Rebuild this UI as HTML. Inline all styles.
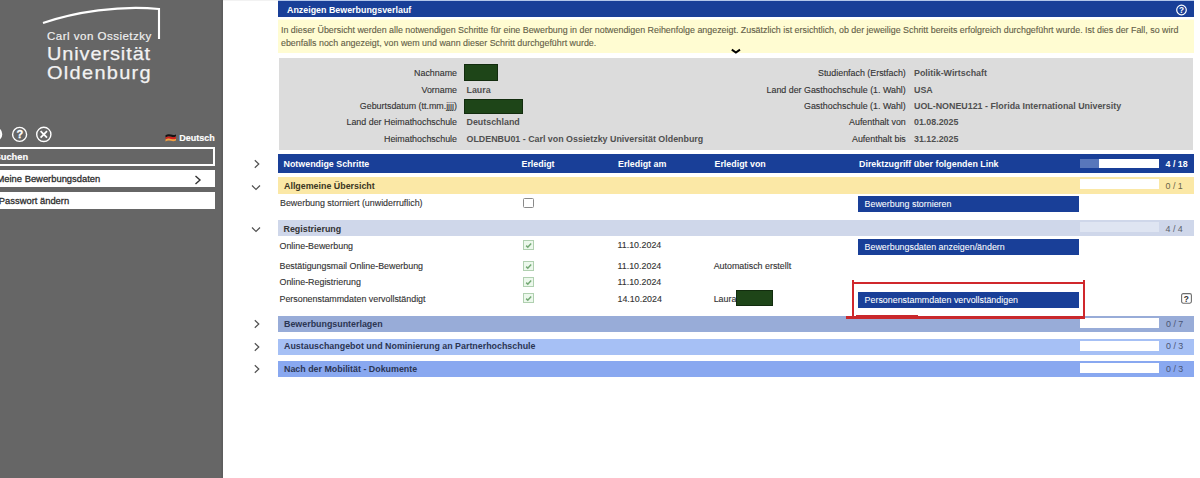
<!DOCTYPE html>
<html><head><meta charset="utf-8">
<style>
*{margin:0;padding:0;box-sizing:border-box}
html,body{width:1200px;height:478px;overflow:hidden;background:#fff;font-family:"Liberation Sans",sans-serif;}
.a{position:absolute;white-space:nowrap}
#sb{position:absolute;left:0;top:0;width:223px;height:478px;background:#666666;box-shadow:inset -1.5px 0 0 #5d5d5d}
.t{position:absolute;white-space:nowrap;font-size:8.9px;line-height:10px;color:#333;-webkit-text-stroke-width:0.12px}
.b{-webkit-text-stroke-width:0}
.v{color:#505050}
.b{font-weight:bold}
.r{text-align:right}
.box{position:absolute}
.btn{position:absolute;left:858px;width:221px;height:16px;background:#193f98;color:#fff;font-size:8.9px;line-height:17px;padding-left:6.6px;white-space:nowrap;-webkit-text-stroke-width:0.05px}
.prog{position:absolute;left:1080px;width:79px;height:10px;background:#fff}
.cnt{position:absolute;left:1164px;width:24px;font-size:8.9px;line-height:10px;white-space:nowrap}
.chk{position:absolute;left:523px;width:11px;height:10px;border:1px solid #b0d0b0;background:#ecf8ec}
.chk svg{position:absolute;left:0;top:0}
.chv{position:absolute;left:254px;width:8px;height:10px}
</style></head><body>
<div id="sb">
  <svg class="a" style="left:0;top:0" width="222" height="478" viewBox="0 0 222 478">
    <path d="M43,23 C75,12 120,5 159,9 L159,39" fill="none" stroke="#fff" stroke-width="2.1"/>
    <!-- icons -->
    <circle cx="-5" cy="134.2" r="6.2" fill="none" stroke="#fff" stroke-width="2.2"/>
    <circle cx="19.6" cy="134.4" r="7" fill="none" stroke="#fff" stroke-width="1.4"/>
    <circle cx="43.8" cy="134.4" r="7.1" fill="none" stroke="#fff" stroke-width="1.4"/>
    <path d="M40.6,131.2 L47,137.6 M47,131.2 L40.6,137.6" stroke="#fff" stroke-width="1.8"/>
    <!-- flag -->
    <path d="M165.5,135.2 Q168,133.6 171,134.6 Q173.5,135.4 176,134.4 L176,136.6 Q173.5,137.6 171,136.8 Q168,135.8 165.5,137.4 Z" fill="#141414"/>
    <path d="M165.5,137.4 Q168,135.8 171,136.8 Q173.5,137.6 176,136.6 L176,138.8 Q173.5,139.8 171,139 Q168,138 165.5,139.6 Z" fill="#d2231c"/>
    <path d="M165.5,139.6 Q168,138 171,139 Q173.5,139.8 176,138.8 L176,140.6 Q173.5,141.6 171,140.8 Q168,139.8 165.5,141.4 Z" fill="#f2a040"/>
  </svg>
  <div class="a" style="left:19.6px;top:134.4px;width:0;height:0"><span style="position:absolute;left:-3.2px;top:-6.5px;font-size:11px;line-height:12px;font-weight:bold;color:#fff;-webkit-text-stroke:0.3px #fff">?</span></div>
  <div class="a" style="left:47px;top:30px;font-size:11px;line-height:12px;color:#f2f2f2;transform:scaleX(1.05);transform-origin:0 0;letter-spacing:0.45px;-webkit-text-stroke:0.15px #f2f2f2">Carl von Ossietzky</div>
  <div class="a" style="left:47px;top:44px;font-size:19px;line-height:20px;color:#f2f2f2;transform:scaleX(1.05);transform-origin:0 0;letter-spacing:0.85px;-webkit-text-stroke:0.25px #f2f2f2">Universität</div>
  <div class="a" style="left:47px;top:63px;font-size:19px;line-height:20px;color:#f2f2f2;transform:scaleX(1.05);transform-origin:0 0;letter-spacing:1.25px;-webkit-text-stroke:0.25px #f2f2f2">Oldenburg</div>
  <div class="a" style="left:179.3px;top:133.3px;font-size:9px;line-height:11px;color:#fff;font-weight:bold;-webkit-text-stroke:0.15px #fff">Deutsch</div>
  <div class="a" style="left:-8px;top:147px;width:222.5px;height:19px;border:2px solid #fff"></div>
  <div class="a" style="left:-5.5px;top:152px;font-size:9.3px;line-height:11px;color:#fff;font-weight:bold;-webkit-text-stroke:0.15px #fff">Suchen</div>
  <div class="a" style="left:-8px;top:170px;width:222.5px;height:17px;background:#fff"></div>
  <div class="a" style="left:-3.5px;top:173px;font-size:9.4px;line-height:11px;color:#2e2e2e;-webkit-text-stroke-width:0.3px">Meine Bewerbungsdaten</div>
  <svg class="a" style="left:194px;top:174.5px" width="8" height="10" viewBox="0 0 8 10"><path d="M1.5,1 L6,5 L1.5,9" fill="none" stroke="#333" stroke-width="1.4"/></svg>
  <div class="a" style="left:-8px;top:191.5px;width:222.5px;height:17.5px;background:#fff"></div>
  <div class="a" style="left:-1.2px;top:195px;font-size:9.4px;line-height:11px;color:#2e2e2e;-webkit-text-stroke-width:0.3px">Passwort ändern</div>
</div>

<!-- main header -->
<div class="box" style="left:278px;top:0;width:916px;height:1px;background:#b3c6ea"></div>
<div class="box" style="left:223px;top:0;width:55px;height:1px;background:#f2f2f2"></div>
<div class="box" style="left:278px;top:1px;width:916px;height:16px;background:#193f98"></div>
<div class="t b" style="left:287px;top:4.5px;color:#fff">Anzeigen Bewerbungsverlauf</div>
<svg class="a" style="left:1175px;top:4px" width="13" height="13" viewBox="0 0 13 13"><circle cx="6.5" cy="6" r="4.8" fill="none" stroke="#fff" stroke-width="1.2"/><text x="6.5" y="9.2" font-size="8.2" font-weight="bold" text-anchor="middle" fill="#fff" font-family="Liberation Sans">?</text></svg>

<!-- info -->
<div class="box" style="left:278px;top:19px;width:916px;height:1px;background:#fffeea"></div><div class="box" style="left:278px;top:20px;width:916px;height:33px;background:#fffcd2"></div>
<div class="t" style="left:281px;top:25px;color:#645f48">In dieser Übersicht werden alle notwendigen Schritte für eine Bewerbung in der notwendigen Reihenfolge angezeigt. Zusätzlich ist ersichtlich, ob der jeweilige Schritt bereits erfolgreich durchgeführt wurde. Ist dies der Fall, so wird</div>
<div class="t" style="left:281px;top:37.8px;color:#645f48">ebenfalls noch angezeigt, von wem und wann dieser Schritt durchgeführt wurde.</div>
<svg class="a" style="left:730px;top:47px" width="12" height="8" viewBox="0 0 12 8"><path d="M1.8,2.6 L5.9,5.5 L10,2.6" fill="none" stroke="#000" stroke-width="1.9"/></svg>

<!-- gray info box -->
<div class="box" style="left:279px;top:58px;width:914px;height:92px;background:#dcdcdc"></div>
<div class="t r" style="left:257px;width:200px;top:68px">Nachname</div>
<div class="box" style="left:464px;top:64px;width:34px;height:16.8px;background:#1e4518;border:1px solid #122c0e"></div>
<div class="t r" style="left:257px;width:200px;top:84.5px">Vorname</div>
<div class="t b v" style="left:466.5px;top:84.5px">Laura</div>
<div class="t r" style="left:257px;width:200px;top:101px">Geburtsdatum (tt.mm.jjjj)</div>
<div class="box" style="left:464px;top:99px;width:59px;height:15px;background:#1e4518;border:1px solid #122c0e"></div>
<div class="t r" style="left:257px;width:200px;top:117px">Land der Heimathochschule</div>
<div class="t b v" style="left:466.5px;top:117px">Deutschland</div>
<div class="t r" style="left:257px;width:200px;top:134px">Heimathochschule</div>
<div class="t b v" style="left:466.5px;top:134px">OLDENBU01 - Carl von Ossietzky Universität Oldenburg</div>

<div class="t r" style="left:705.8px;width:200px;top:68px">Studienfach (Erstfach)</div>
<div class="t b v" style="left:914px;top:68px">Politik-Wirtschaft</div>
<div class="t r" style="left:705.8px;width:200px;top:84.5px">Land der Gasthochschule (1. Wahl)</div>
<div class="t b v" style="left:914px;top:84.5px">USA</div>
<div class="t r" style="left:705.8px;width:200px;top:101px">Gasthochschule (1. Wahl)</div>
<div class="t b v" style="left:914px;top:101px">UOL-NONEU121 - Florida International University</div>
<div class="t r" style="left:705.8px;width:200px;top:117px">Aufenthalt von</div>
<div class="t b v" style="left:914px;top:117px">01.08.2025</div>
<div class="t r" style="left:705.8px;width:200px;top:134px">Aufenthalt bis</div>
<div class="t b v" style="left:914px;top:134px">31.12.2025</div>

<!-- table header -->
<svg class="chv" style="top:159px" viewBox="0 0 8 10"><path d="M0.8,1.2 L4.8,5 L0.8,8.8" fill="none" stroke="#505050" stroke-width="1.2"/></svg>
<div class="box" style="left:278px;top:154px;width:916px;height:18.5px;background:#193f98"></div>
<div class="t b" style="left:283.5px;top:159px;color:#fff">Notwendige Schritte</div>
<div class="t b" style="left:521.5px;top:159px;color:#fff">Erledigt</div>
<div class="t b" style="left:618px;top:159px;color:#fff">Erledigt am</div>
<div class="t b" style="left:714.5px;top:159px;color:#fff">Erledigt von</div>
<div class="t b" style="left:859px;top:159px;color:#fff">Direktzugriff über folgenden Link</div>
<div class="prog" style="top:159px;height:9px;background:#fff"></div>
<div class="box" style="left:1080px;top:159px;width:19px;height:9px;background:#5877bb"></div>
<div class="cnt b" style="top:159px;color:#fff;left:1165.5px">4 / 18</div>

<!-- Allgemeine Übersicht -->
<svg class="chv" style="left:251px;top:183.5px;width:10px;height:8px" viewBox="0 0 10 8"><path d="M1,1.5 L5,5.5 L9,1.5" fill="none" stroke="#505050" stroke-width="1.2"/></svg>
<div class="box" style="left:278px;top:177px;width:916px;height:16.5px;background:#fbe8a6"></div>
<div class="t b" style="left:284px;top:180.5px;color:#3a3622">Allgemeine Übersicht</div>
<div class="prog" style="top:179px"></div>
<div class="cnt" style="top:180.5px;left:1165.5px;color:#6a6448">0 / 1</div>

<div class="t" style="left:280px;top:198px">Bewerbung storniert (unwiderruflich)</div>
<div class="chk" style="top:197.5px;border-color:#8a8a8a;background:#fff;border-radius:1.5px"></div>
<div class="btn" style="top:196px;height:16px">Bewerbung stornieren</div>

<!-- Registrierung -->
<svg class="chv" style="left:251px;top:226px;width:10px;height:8px" viewBox="0 0 10 8"><path d="M1,1.5 L5,5.5 L9,1.5" fill="none" stroke="#505050" stroke-width="1.2"/></svg>
<div class="box" style="left:278px;top:220px;width:916px;height:16px;background:#cfd7ea"></div>
<div class="t b" style="left:283.5px;top:223.5px">Registrierung</div>
<div class="prog" style="top:222px;background:#dfe5f2"></div>
<div class="cnt" style="top:223.5px;left:1165.5px;color:#5a5f6a">4 / 4</div>

<div class="t" style="left:279.5px;top:240.5px">Online-Bewerbung</div>
<div class="chk" style="top:240px"><svg width="9" height="8" viewBox="0 0 9 8"><path d="M2.2,4.6 L3.8,6.2 L7.2,2.6" fill="none" stroke="#74a874" stroke-width="1.5"/></svg></div>
<div class="t" style="left:617.5px;top:240px">11.10.2024</div>
<div class="btn" style="top:238.5px;height:16px">Bewerbungsdaten anzeigen/ändern</div>

<div class="t" style="left:279.5px;top:261px">Bestätigungsmail Online-Bewerbung</div>
<div class="chk" style="top:260.5px"><svg width="9" height="8" viewBox="0 0 9 8"><path d="M2.2,4.6 L3.8,6.2 L7.2,2.6" fill="none" stroke="#74a874" stroke-width="1.5"/></svg></div>
<div class="t" style="left:617.5px;top:260.5px">11.10.2024</div>
<div class="t" style="left:713.7px;top:260.5px">Automatisch erstellt</div>

<div class="t" style="left:279.5px;top:277px">Online-Registrierung</div>
<div class="chk" style="top:276.5px"><svg width="9" height="8" viewBox="0 0 9 8"><path d="M2.2,4.6 L3.8,6.2 L7.2,2.6" fill="none" stroke="#74a874" stroke-width="1.5"/></svg></div>
<div class="t" style="left:617.5px;top:277px">11.10.2024</div>

<div class="t" style="left:279.5px;top:293.5px">Personenstammdaten vervollständigt</div>
<div class="chk" style="top:293px"><svg width="9" height="8" viewBox="0 0 9 8"><path d="M2.2,4.6 L3.8,6.2 L7.2,2.6" fill="none" stroke="#74a874" stroke-width="1.5"/></svg></div>
<div class="t" style="left:617.5px;top:293.5px">14.10.2024</div>
<div class="t" style="left:713.7px;top:293.5px">Laura</div>
<div class="box" style="left:736px;top:290px;width:37px;height:15.5px;background:#1e4518;border:1px solid #122c0e"></div>
<div class="btn" style="top:292px;height:15.5px">Personenstammdaten vervollständigen</div>
<svg class="a" style="left:1181px;top:293px" width="11" height="11" viewBox="0 0 11 11"><rect x="0.6" y="0.6" width="9.8" height="9.6" rx="1.6" fill="#fff" stroke="#6d6d6d" stroke-width="1.1"/><text x="5.4" y="8.6" font-size="8.4" font-weight="bold" text-anchor="middle" fill="#333" font-family="Liberation Sans">?</text></svg>

<!-- collapsed sections -->
<svg class="chv" style="top:319px" viewBox="0 0 8 10"><path d="M0.8,1.2 L4.8,5 L0.8,8.8" fill="none" stroke="#505050" stroke-width="1.2"/></svg>
<div class="box" style="left:278px;top:316px;width:916px;height:15.7px;background:#98acd8"></div>
<div class="t b" style="left:284px;top:319px;color:#2b3553">Bewerbungsunterlagen</div>
<div class="prog" style="top:318px"></div>
<div class="cnt" style="top:319px;left:1166px;color:#4a5472">0 / 7</div>

<svg class="chv" style="top:341.5px" viewBox="0 0 8 10"><path d="M0.8,1.2 L4.8,5 L0.8,8.8" fill="none" stroke="#505050" stroke-width="1.2"/></svg>
<div class="box" style="left:278px;top:338.5px;width:916px;height:16px;background:#a6c0f5"></div>
<div class="t b" style="left:284px;top:341px;color:#2b3553">Austauschangebot und Nominierung an Partnerhochschule</div>
<div class="prog" style="top:340.5px"></div>
<div class="cnt" style="top:341px;left:1166px;color:#4a5472">0 / 3</div>

<svg class="chv" style="top:363.5px" viewBox="0 0 8 10"><path d="M0.8,1.2 L4.8,5 L0.8,8.8" fill="none" stroke="#505050" stroke-width="1.2"/></svg>
<div class="box" style="left:278px;top:360.5px;width:916px;height:16px;background:#89a8f0"></div>
<div class="t b" style="left:284px;top:363.5px;color:#2b3553">Nach der Mobilität - Dokumente</div>
<div class="prog" style="top:362.5px"></div>
<div class="cnt" style="top:363.5px;left:1166px;color:#4a5472">0 / 3</div>

<!-- red annotation -->
<div class="box" style="left:851.8px;top:279.8px;width:2px;height:38.5px;background:#d0282c"></div>
<div class="box" style="left:852px;top:281.5px;width:232px;height:2px;background:#d0282c"></div>
<div class="box" style="left:1083px;top:280px;width:2px;height:38px;background:#d0282c"></div>
<div class="box" style="left:846px;top:316px;width:239px;height:2.7px;background:#c9282c"></div>
<div class="box" style="left:856px;top:315.3px;width:62px;height:3.4px;background:#c9282c"></div>

</body></html>
